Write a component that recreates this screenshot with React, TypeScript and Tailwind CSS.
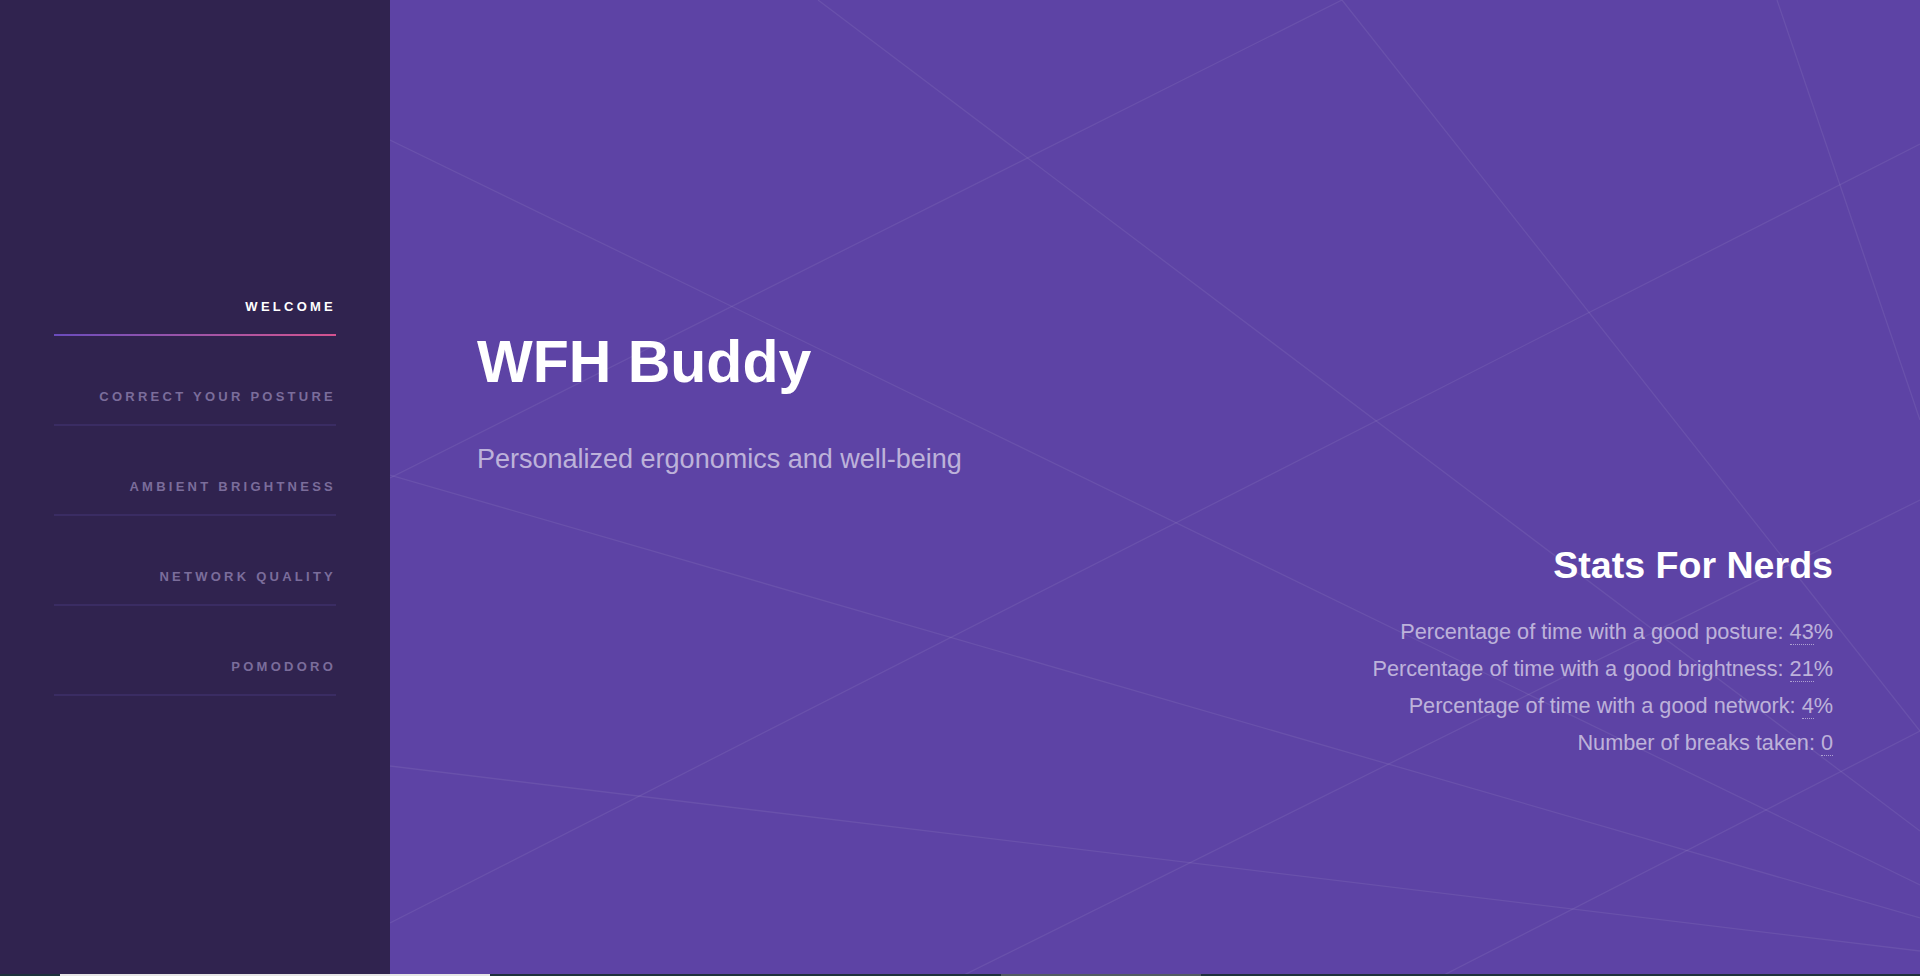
import React from "react";

const lines: [number, number, number, number][] = [
  [428, 0, 1530, 831],
  [0, 140, 1530, 885],
  [952, 0, 0, 478],
  [0, 475, 1530, 918],
  [1387, 0, 1530, 420],
  [952, 0, 1530, 731],
  [1530, 144, 0, 923],
  [0, 766, 1530, 951],
  [1530, 500, 572, 976],
  [1052, 976, 1530, 731],
];

const navItems = [
  { label: "WELCOME", active: true },
  { label: "CORRECT YOUR POSTURE", active: false },
  { label: "AMBIENT BRIGHTNESS", active: false },
  { label: "NETWORK QUALITY", active: false },
  { label: "POMODORO", active: false },
];

const stats = [
  { label: "Percentage of time with a good posture: ", value: "43", suffix: "%" },
  { label: "Percentage of time with a good brightness: ", value: "21", suffix: "%" },
  { label: "Percentage of time with a good network: ", value: "4", suffix: "%" },
  { label: "Number of breaks taken: ", value: "0", suffix: "" },
];

export default function App() {
  return (
    <div
      className="flex h-[976px] w-full flex-col overflow-hidden"
      style={{ fontFamily: '"Liberation Sans", Arial, sans-serif' }}
    >
      <div className="flex h-[974px] w-full">
        <aside className="w-[390px] shrink-0 bg-[#30234f] px-[54px] pt-[246px]">
          <nav className="flex flex-col">
            {navItems.map((item) => (
              <a key={item.label} className="flex flex-col pt-[53px]">
                <span
                  className={`block text-right text-[13px] font-bold leading-[16px] tracking-[3.25px] ${
                    item.active ? "text-white" : "text-[#7b6d9b]"
                  }`}
                >
                  {item.label}
                </span>
                <span
                  className={`mt-[19px] block h-[2px] w-full ${
                    item.active
                      ? "bg-gradient-to-r from-[#6a4bbd] to-[#d4528f]"
                      : "bg-[#3a2c63]"
                  }`}
                />
              </a>
            ))}
          </nav>
        </aside>
        <main className="relative flex-1 overflow-hidden bg-[#5d43a5]">
          <svg
            className="absolute inset-0 h-full w-full"
            viewBox="0 0 1530 974"
            preserveAspectRatio="none"
          >
            {lines.map(([x1, y1, x2, y2], i) => (
              <line
                key={i}
                x1={x1}
                y1={y1}
                x2={x2}
                y2={y2}
                stroke="rgba(255,255,255,0.075)"
                strokeWidth={1.3}
              />
            ))}
          </svg>
          <div className="relative flex flex-col pl-[87px] pr-[87px] pt-[332px]">
            <h1 className="text-[59px] font-bold leading-[60px] text-white">WFH Buddy</h1>
            <p className="mt-[51px] text-[27px] leading-[32px] text-white/60">
              Personalized ergonomics and well-being
            </p>
            <div className="mt-[68px] self-end text-right">
              <h2 className="text-[37.6px] font-bold leading-[44px] text-white">Stats For Nerds</h2>
              <div className="mt-[26px] flex flex-col text-[21.7px] leading-[37px] text-white/60">
                {stats.map((s) => (
                  <p key={s.label}>
                    {s.label}
                    <span className="border-b border-dotted border-white/50">{s.value}</span>
                    {s.suffix}
                  </p>
                ))}
              </div>
            </div>
          </div>
        </main>
      </div>
      <div className="flex h-[2px] w-full">
        <div className="w-[60px] bg-[#1f323d]" />
        <div className="w-[430px] bg-[#e6e6e6]" />
        <div className="w-[511px] bg-[#1f323d]" />
        <div className="w-[200px] bg-[#525b62]" />
        <div className="flex-1 bg-[#1f323d]" />
      </div>
    </div>
  );
}
